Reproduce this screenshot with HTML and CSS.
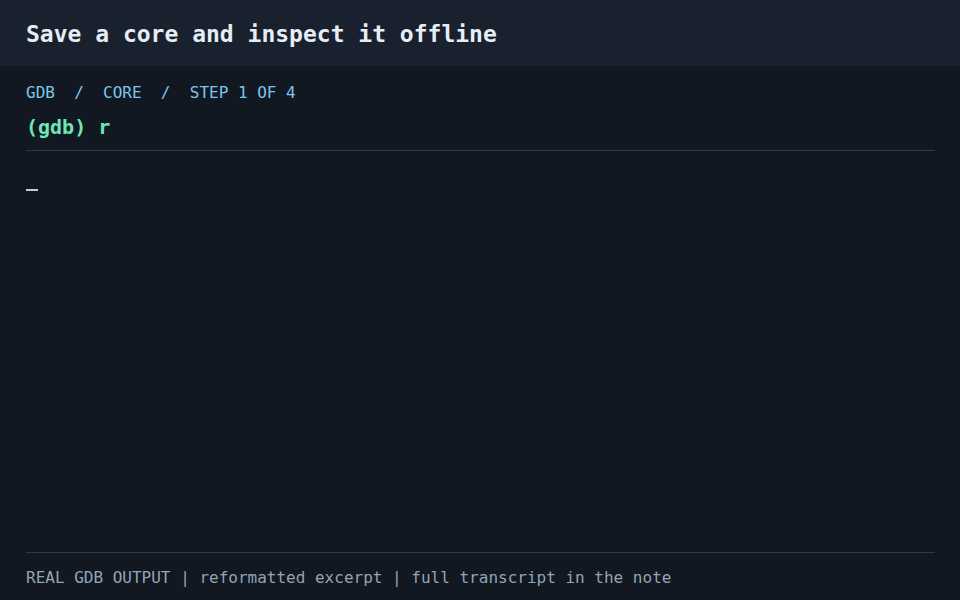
FILE: index.html
```html
<!DOCTYPE html>
<html lang="en">
<head>
<meta charset="utf-8">
<title>Save a core and inspect it offline</title>
<link rel="stylesheet" href="styles.css">
</head>
<body>
<header class="topbar">
  <h1 class="title">Save a core and inspect it offline</h1>
</header>
<main class="panel">
  <div class="crumbs">GDB&nbsp;&nbsp;/&nbsp;&nbsp;CORE&nbsp;&nbsp;/&nbsp;&nbsp;STEP 1 OF 4</div>
  <div class="prompt">(gdb) r</div>
  <div class="output">
    <div class="cursor"></div>
  </div>
  <footer class="foot">REAL GDB OUTPUT | reformatted excerpt | full transcript in the note</footer>
</main>
</body>
</html>
```
FILE: styles.css
```css
* { box-sizing: border-box; }
html, body { margin: 0; padding: 0; }
body {
  width: 960px;
  height: 600px;
  overflow: hidden;
  background: #111821;
  font-family: "DejaVu Sans Mono", "Liberation Mono", monospace;
  display: flex;
  flex-direction: column;
}
.topbar {
  height: 66px;
  flex: none;
  background: #18212d;
  display: flex;
  align-items: center;
  padding: 2px 26px 0;
}
.title {
  margin: 0;
  font-size: 23px;
  line-height: 28px;
  font-weight: bold;
  color: #e6edf5;
}
.panel {
  flex: 1;
  display: flex;
  flex-direction: column;
  padding: 17px 25px 0 26px;
}
.crumbs {
  font-size: 16px;
  line-height: 20px;
  color: #7cc6ea;
}
.prompt {
  margin-top: 12px;
  font-size: 20px;
  line-height: 24px;
  font-weight: bold;
  color: #6ee7b7;
  padding-bottom: 11px;
  border-bottom: 1px solid #2b3b4f;
}
.output {
  flex: 1;
  padding-top: 38px;
}
.cursor {
  width: 12px;
  height: 2px;
  background: #c3cedb;
}
.foot {
  border-top: 1px solid #2b3b4f;
  padding: 15px 0 12px;
  font-size: 16px;
  line-height: 20px;
  color: #95a3b4;
}
```
